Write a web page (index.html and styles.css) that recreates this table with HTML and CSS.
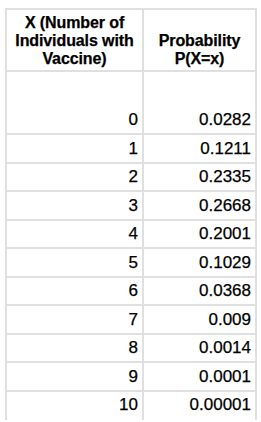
FILE: index.html
```
<!DOCTYPE html>
<html>
<head>
<meta charset="utf-8">
<link rel="stylesheet" href="styles.css">
</head>
<body>
<table class="dist">
  <thead>
    <tr class="head">
      <th class="c1">X (Number of<br>Individuals with<br>Vaccine)</th>
      <th class="c2">Probability<br>P(X=x)</th>
    </tr>
  </thead>
  <tbody>
    <tr class="first"><td>0</td><td>0.0282</td></tr>
    <tr><td>1</td><td>0.1211</td></tr>
    <tr><td>2</td><td>0.2335</td></tr>
    <tr><td>3</td><td>0.2668</td></tr>
    <tr><td>4</td><td>0.2001</td></tr>
    <tr><td>5</td><td>0.1029</td></tr>
    <tr><td>6</td><td>0.0368</td></tr>
    <tr><td>7</td><td>0.009</td></tr>
    <tr><td>8</td><td>0.0014</td></tr>
    <tr><td>9</td><td>0.0001</td></tr>
    <tr><td>10</td><td>0.00001</td></tr>
  </tbody>
</table>
</body>
</html>
```
FILE: styles.css
```
html, body {
  margin: 0;
  padding: 0;
  background: #ffffff;
}
body {
  padding: 8px 0 0 5px;
  font-family: "Liberation Sans", Arial, sans-serif;
  color: #000;
}
.dist {
  border-collapse: collapse;
  table-layout: fixed;
  width: 250px;
}
.dist th, .dist td {
  border: 2px solid #e0e0e0;
  padding: 0 4px 4px 4px;
  vertical-align: bottom;
  -webkit-text-stroke: 0.25px #000;
}
.dist th {
  font-weight: bold;
  font-size: 16px;
  line-height: 18px;
  text-align: center;
  height: 62px;
  box-sizing: border-box;
  padding-bottom: 2px;
  letter-spacing: -0.1px;
}
.dist .c1 { width: 137px; }
.dist .c2 { width: 113px; }
.dist td {
  font-size: 17px;
  line-height: 18px;
  text-align: right;
  height: 28.5px;
  box-sizing: border-box;
}
.dist tr.first td {
  height: 63px;
}
.dist tr:last-child td {
  border-bottom-color: transparent;
}
```
